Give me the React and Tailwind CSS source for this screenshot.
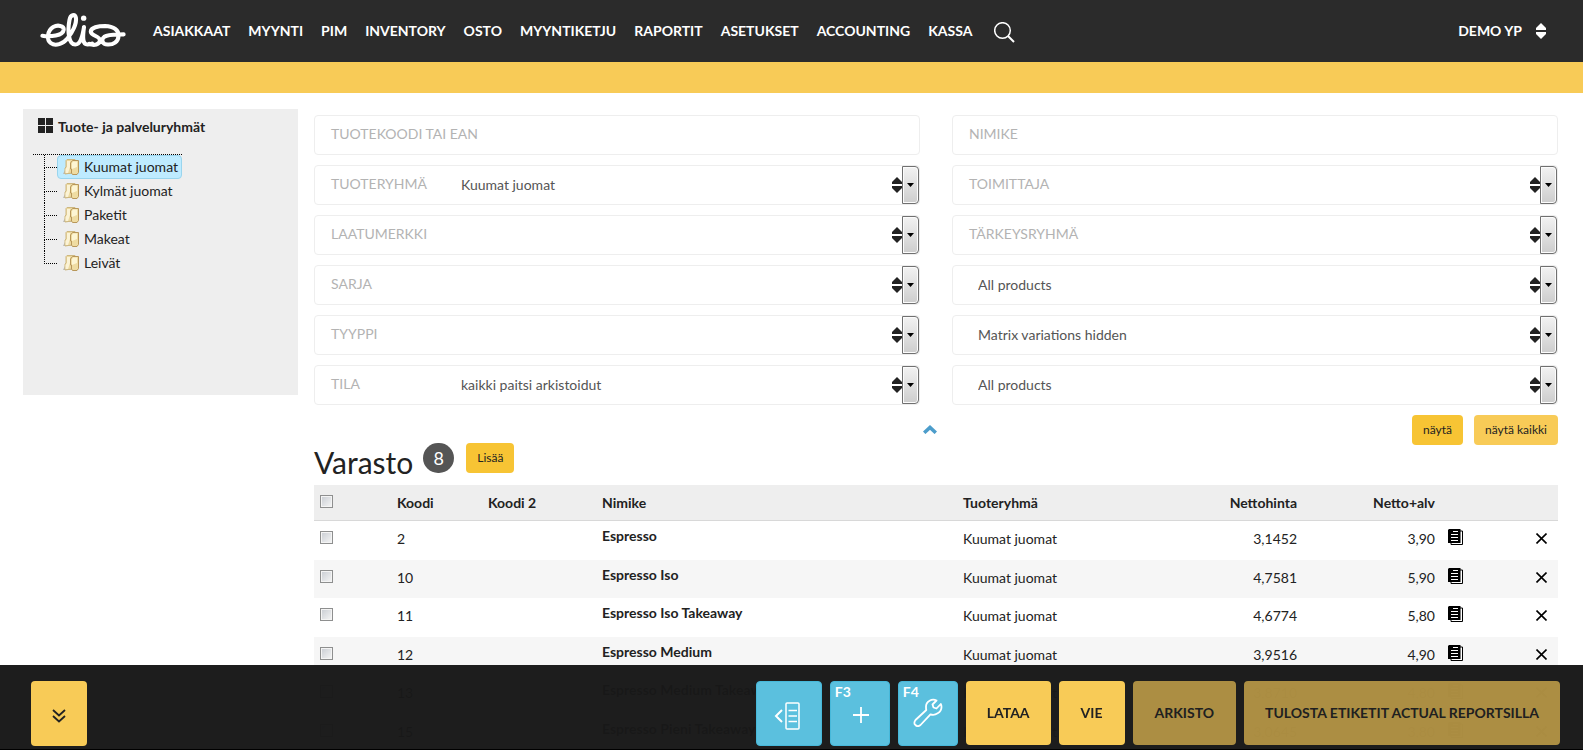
import React from 'react';

const NAV_ITEMS = [
  'ASIAKKAAT', 'MYYNTI', 'PIM', 'INVENTORY', 'OSTO', 'MYYNTIKETJU',
  'RAPORTIT', 'ASETUKSET', 'ACCOUNTING', 'KASSA',
];

const GROUPS = ['Kuumat juomat', 'Kylmät juomat', 'Paketit', 'Makeat', 'Leivät'];

const LEFT_FILTERS = [
  { id: 'group', label: 'TUOTERYHMÄ', value: 'Kuumat juomat' },
  { id: 'brand', label: 'LAATUMERKKI', value: '' },
  { id: 'series', label: 'SARJA', value: '' },
  { id: 'type', label: 'TYYPPI', value: '' },
  { id: 'status', label: 'TILA', value: 'kaikki paitsi arkistoidut' },
];

const RIGHT_FILTERS = [
  { id: 'supplier', label: 'TOIMITTAJA', value: '' },
  { id: 'priority', label: 'TÄRKEYSRYHMÄ', value: '' },
  { id: 'products', value: 'All products' },
  { id: 'matrix', value: 'Matrix variations hidden' },
  { id: 'webshop', value: 'All products' },
];

const PRODUCTS = [
  { code: '2', name: 'Espresso', net: '3,1452', gross: '3,90' },
  { code: '10', name: 'Espresso Iso', net: '4,7581', gross: '5,90' },
  { code: '11', name: 'Espresso Iso Takeaway', net: '4,6774', gross: '5,80' },
  { code: '12', name: 'Espresso Medium', net: '3,9516', gross: '4,90' },
  { code: '13', name: 'Espresso Medium Takeaway', net: '3,8710', gross: '4,80' },
  { code: '15', name: 'Espresso Pieni Takeaway', net: '3,0645', gross: '3,80' },
];

function Logo() {
  return (
    <svg viewBox="120 36 254 106" className="h-9 w-[86px]" fill="none" stroke="white" strokeWidth="12" strokeLinecap="round" strokeLinejoin="round">
      <path d="M127 106C150 110 188 106 190 88C191 76 172 73 159 80C142 90 138 118 152 128C166 138 188 130 201 114C216 96 229 70 226 52C223 42 210 42 207 60C201 92 204 132 224 132C240 132 246 106 250 80C246 108 245 132 260 132C266 132 270 131 274 129" />
      <path d="M266 130C280 136 296 132 297 120C298 106 272 108 270 94C270 82 292 77 312 77C338 78 353 90 352 106C351 124 336 133 320 132C304 131 299 118 310 109C322 101 345 103 367 102" />
      <circle cx="249" cy="54" r="8" fill="white" stroke="none" />
    </svg>
  );
}

function SortIcon() {
  return (
    <svg viewBox="0 0 10 16" className="h-4 w-[10px] shrink-0" fill="currentColor">
      <path d="M5 0L10 5V7H0V5Z" />
      <path d="M5 16L10 11V9H0V11Z" />
    </svg>
  );
}

function FolderIcon() {
  return (
    <svg viewBox="0 0 16 16" className="h-4 w-4 shrink-0">
      <path d="M0 15L2 11L8 11V15Z" fill="#b9b9b9" />
      <path d="M3 1.500L4 0.500H12V14H9L2 15V9L3 8Z" fill="#ecd9a0" stroke="#cdb780" strokeWidth="1" />
      <path d="M4 2H7V8L5 14H2.500V10L4 8Z" fill="#fbf3d6" />
      <path d="M7.500 4L9.500 1.500H15.500V13.500L14 15.500H9.500L8.500 14V10H7.500Z" fill="#efdca2" stroke="#b8975a" strokeWidth="1" />
      <path d="M9 4L10 2.500H14V8L9 10Z" fill="#fdf5d3" />
    </svg>
  );
}

function DocIcon() {
  return (
    <svg viewBox="0 0 15 16" className="h-4 w-[15px]">
      <path d="M3 2H14.500V15.500H3Z" fill="white" stroke="black" />
      <path d="M1 0H12.500V14H0V1Z" fill="black" />
      <path d="M5 2.500H10M3 5.500H10M3 8.500H10M3 11.500H10" stroke="white" />
    </svg>
  );
}

function SelectField({ id, label, value }) {
  return (
    <div className="flex h-10 items-center rounded border border-[#eee] bg-white text-[#222]">
      {label && <label htmlFor={id} className="w-[146px] shrink-0 pb-[3px] pl-4 text-[#b3b3b3]">{label}</label>}
      <select
        id={id}
        aria-label={label ? undefined : value}
        defaultValue={value}
        className={`h-full min-w-0 flex-1 appearance-none bg-transparent text-[#555] outline-none ${label ? '' : 'pl-[25px]'}`}
      >
        <option>{value}</option>
      </select>
      <SortIcon />
      <span className="flex h-[38px] w-[17px] shrink-0 items-center justify-center rounded-r-sm border border-[#707070] bg-linear-to-b from-[#f2f2f2] via-[#e0e0e0] to-[#cdcdcd] shadow-[inset_0_0_0_1px_#fcfcfc]">
        <svg viewBox="0 0 7 4" className="h-1 w-[7px]"><path d="M0 0H7L3.500 4Z" fill="black" /></svg>
      </span>
    </div>
  );
}

function TextField({ id, label }) {
  return (
    <div className="flex h-10 items-center rounded border border-[#eee] bg-white">
      <label htmlFor={id} className="w-[180px] shrink-0 pb-[3px] pl-4 text-[#b3b3b3]">{label}</label>
      <input id={id} type="text" className="h-full min-w-0 flex-1 bg-transparent text-[#555] outline-none" />
    </div>
  );
}

function Checkbox({ label }) {
  return (
    <input
      type="checkbox"
      aria-label={label}
      className="block h-[13px] w-[13px] appearance-none border border-[#8e8f8f] bg-linear-to-br from-[#c8ccd2] to-[#f6f6f6] shadow-[inset_0_0_0_1px_#f4f4f4]"
    />
  );
}

function Header() {
  return (
    <header className="flex h-[62px] shrink-0 items-center bg-[#2b2b2b] pr-[37px] pl-10 font-bold text-white">
      <a href="#" aria-label="elisa" className="pb-[2px]"><Logo /></a>
      <nav className="ml-[27px] flex items-center gap-[18px]">
        {NAV_ITEMS.map((item) => (
          <a key={item} href="#">{item}</a>
        ))}
        <button type="button" aria-label="Haku" className="mt-[2px] ml-1">
          <svg viewBox="0 0 21 21" className="h-[21px] w-[21px]" fill="none" stroke="white">
            <circle cx="8.500" cy="8.500" r="7.800" strokeWidth="1.500" />
            <path d="M14 14L20 20" strokeWidth="2" />
          </svg>
        </button>
      </nav>
      <button type="button" className="ml-auto flex items-center gap-[14px]">
        DEMO YP
        <SortIcon />
      </button>
    </header>
  );
}

function Sidebar() {
  return (
    <aside className="h-[286px] w-[275px] shrink-0 bg-[#eee] pt-2 pl-[10px]">
      <h2 className="flex gap-[5px] pl-[5px] font-bold">
        <svg viewBox="0 0 15 15" className="mt-px h-[15px] w-[15px]" fill="#222">
          <path d="M0 0H7V7H0ZM8 0H15V7H8ZM0 8H7V15H0ZM8 8H15V15H8Z" />
        </svg>
        Tuote- ja palveluryhmät
      </h2>
      <ul className="mt-[17px] w-[149px] border-t border-dotted border-black">
        {GROUPS.map((group, i) => (
          <li key={group} className="flex h-6 pl-[11px]">
            <span className="w-[13px] shrink-0">
              <span className="block h-[13px] border-b border-l border-dotted border-black"></span>
              {i < GROUPS.length - 1 && <span className="block h-[11px] border-l border-dotted border-black"></span>}
            </span>
            <a
              href="#"
              className={`flex h-6 items-center gap-[5px] rounded-sm border pr-[3px] pb-px pl-[5px] whitespace-nowrap ${i === 0 ? 'border-[#99d5ee] bg-[#beebff]' : 'border-transparent'}`}
            >
              <FolderIcon />
              <span>{group}</span>
            </a>
          </li>
        ))}
      </ul>
    </aside>
  );
}

function ProductTable() {
  return (
    <table className="w-full table-fixed border-collapse">
      <colgroup>
        <col className="w-[83px]" />
        <col className="w-[91px]" />
        <col className="w-[114px]" />
        <col />
        <col className="w-[200px]" />
        <col className="w-[134px]" />
        <col className="w-[138px]" />
        <col className="w-[60px]" />
        <col className="w-[63px]" />
      </colgroup>
      <thead>
        <tr className="h-9 bg-[#eee] text-left shadow-[inset_0_-1px_0_#d8d8d8]">
          <th className="pb-1 pl-[6px]"><Checkbox label="Valitse kaikki" /></th>
          <th>Koodi</th>
          <th>Koodi 2</th>
          <th>Nimike</th>
          <th>Tuoteryhmä</th>
          <th className="text-right">Nettohinta</th>
          <th className="text-right">Netto+alv</th>
          <th></th>
          <th></th>
        </tr>
      </thead>
      <tbody>
        {PRODUCTS.map((p) => (
          <tr key={p.code} className="align-top odd:h-[39px] even:h-[38px] even:bg-[#f6f6f6]">
            <td className="pt-[10px] pl-[6px]"><Checkbox label={p.name} /></td>
            <td className="pt-2">{p.code}</td>
            <td></td>
            <td className="pt-[5px]"><a href="#" className="font-bold">{p.name}</a></td>
            <td className="pt-2">Kuumat juomat</td>
            <td className="pt-2 text-right">{p.net}</td>
            <td className="pt-2 text-right">{p.gross}</td>
            <td className="pt-2 pl-[13px]">
              <button type="button" aria-label="Tiedot" className="block"><DocIcon /></button>
            </td>
            <td className="pt-3 pr-[11px]">
              <button type="button" aria-label="Poista" className="ml-auto block">
                <svg viewBox="0 0 11 11" className="h-[11px] w-[11px]" stroke="black" strokeWidth="1.600"><path d="M0.500 0.500L10.500 10.500M10.500 0.500L0.500 10.500" /></svg>
              </button>
            </td>
          </tr>
        ))}
      </tbody>
    </table>
  );
}

function Footer() {
  return (
    <footer className="fixed inset-x-0 bottom-0 flex h-[85px] items-start gap-2 border-b border-black bg-[#181818]/98 pt-4 pr-[23px] pl-[31px] font-bold text-[#222]">
      <button type="button" aria-label="Sulje" className="mr-auto flex h-[65px] w-14 items-center justify-center rounded bg-[#f8cb57]">
        <svg viewBox="0 0 14 14" className="mt-1 h-[14px] w-[14px]" fill="none" stroke="#222" strokeWidth="1.800">
          <path d="M1 1L7 6.500L13 1M1 7L7 12.500L13 7" />
        </svg>
      </button>
      <button type="button" aria-label="Lista" className="flex h-[65px] w-[66px] items-center justify-center rounded border border-[#46b8da] bg-[#5bc0de]">
        <svg viewBox="0 0 26 28" className="mt-1 mr-1 h-7 w-[26px]" fill="none" stroke="white" strokeWidth="2">
          <path d="M8 8L2 14L8 20" />
          <rect x="12" y="1" width="13" height="26" rx="1" strokeWidth="1.500" />
          <path d="M14.500 8.500H23M14.500 14H23M14.500 19.500H23" strokeWidth="1.600" />
        </svg>
      </button>
      <button type="button" className="flex h-[65px] w-[60px] flex-col items-center rounded border border-[#46b8da] bg-[#5bc0de] text-white">
        <span className="self-start pl-1 leading-5">F3</span>
        <svg viewBox="0 0 16 16" className="mt-[5px] ml-[2px] h-4 w-4" stroke="white" strokeWidth="1.800"><path d="M8 0V16M0 8H16" /></svg>
      </button>
      <button type="button" className="flex h-[65px] w-[60px] flex-col items-center rounded border border-[#46b8da] bg-[#5bc0de] text-white">
        <span className="self-start pl-1 leading-5">F4</span>
        <svg viewBox="0 0 30 29" className="-mt-1 h-[29px] w-[30px]" fill="none" stroke="white" strokeWidth="1.800" strokeLinejoin="round">
          <path d="M23.500 2.500C19 0 13 3.500 13 8.500C13 10 13 11 13.300 12L2.500 22C1 24 1 26 2.500 27C4 28.500 6 28.300 7.500 27L17.500 16.300C22 18 28.500 14.500 28.500 9C28.500 8 28.300 7 27.800 6L23.500 10.500L20.500 9.500L19.500 6.500Z" />
        </svg>
      </button>
      <button type="button" className="h-16 rounded bg-[#f8cb57] px-[21px]">LATAA</button>
      <button type="button" className="h-16 rounded bg-[#f8cb57] px-[22px]">VIE</button>
      <button type="button" disabled className="h-16 rounded bg-[#f8cb57] px-[22px] opacity-65">ARKISTO</button>
      <button type="button" disabled className="h-16 rounded bg-[#f8cb57] px-[21px] opacity-65">TULOSTA ETIKETIT ACTUAL REPORTSILLA</button>
    </footer>
  );
}

export default function App() {
  return (
    <div className="flex h-screen flex-col overflow-hidden bg-white font-['Lato',sans-serif] text-sm leading-5 text-[#222]">
      <Header />
      <div className="h-[31px] shrink-0 bg-[#f8cb57]"></div>

      <div className="flex items-start gap-4 pt-4 pr-[25px] pl-[23px]">
        <Sidebar />

        <main className="min-w-0 flex-1 pt-[6px]">
          <form className="grid grid-cols-2 gap-x-8">
            <div className="flex flex-col gap-[10px]">
              <TextField id="code" label="TUOTEKOODI TAI EAN" />
              {LEFT_FILTERS.map((f) => <SelectField key={f.id} {...f} />)}
            </div>
            <div className="flex flex-col gap-[10px]">
              <TextField id="name" label="NIMIKE" />
              {RIGHT_FILTERS.map((f) => <SelectField key={f.id} {...f} />)}
            </div>
          </form>

          <div className="mt-[10px] grid h-7 grid-cols-[1fr_auto_1fr] items-start text-xs">
            <button type="button" aria-label="Piilota haku" className="col-start-2 mt-[10px] mr-3">
              <svg viewBox="0 0 14 9" className="h-[9px] w-[14px]" fill="none" stroke="#4c9dcb" strokeWidth="3.500"><path d="M1.200 7.800L7 2.400L12.800 7.800" /></svg>
            </button>
            <div className="flex justify-end gap-[11px]">
              <button type="button" className="h-[30px] rounded bg-[#f7c434] px-[11px]">näytä</button>
              <button type="button" className="h-[30px] rounded bg-[#f8cb57] px-[11px]">näytä kaikki</button>
            </div>
          </div>

          <div className="mb-3 flex h-[30px] items-start">
            <h1 className="pt-[9px] text-[30px] leading-5 font-normal">Varasto</h1>
            <span className="ml-[10px] flex h-[30px] w-[31px] items-center justify-center rounded-full bg-[#555] text-lg text-white">8</span>
            <button type="button" className="ml-3 h-[30px] rounded bg-[#f7c434] px-[11px] text-xs">Lisää</button>
          </div>

          <ProductTable />
        </main>
      </div>

      <Footer />
    </div>
  );
}
